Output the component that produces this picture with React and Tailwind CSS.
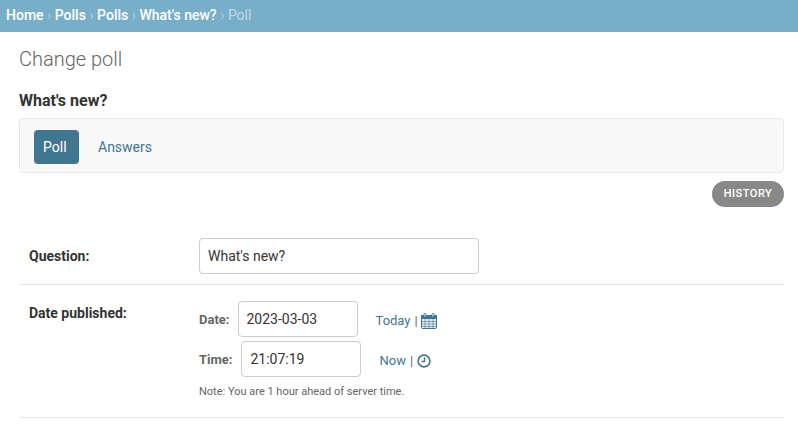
const roboto = "font-['Roboto',sans-serif]";

const Sep = () => <span className="text-[#a8cfe0]"> › </span>;

const CalendarIcon = () => (
  <svg width="16" height="16" viewBox="0 0 16 16" fill="none" stroke="#417690" strokeWidth="1">
    <rect x="0.5" y="2.5" width="15" height="13" rx="1" fill="#e4edf2" />
    <rect x="0.5" y="2.5" width="15" height="3" fill="#417690" />
    <path d="M0.5 8.5H15.5M0.5 11H15.5M0.5 13.5H15.5M4 5.5V15.5M8 5.5V15.5M12 5.5V15.5" strokeWidth="0.6" />
    <rect x="3" y="0.5" width="2" height="3.5" rx="1" fill="#fff" />
    <rect x="11" y="0.5" width="2" height="3.5" rx="1" fill="#fff" />
  </svg>
);

const ClockIcon = () => (
  <svg width="14" height="14" viewBox="0 0 14 14" fill="none" stroke="#417690">
    <circle cx="7" cy="7" r="5.9" strokeWidth="1.6" />
    <path d="M7.5 3.5V7.5H4.5" strokeWidth="1.4" />
  </svg>
);

const DateTimeRow = ({ label, labelGap, value, shortcut, icon }) => (
  <div className="flex items-center h-[38px]">
    <label className={`text-[13px] font-bold text-[#666] leading-none ${labelGap}`}>{label}</label>
    <input
      readOnly
      value={value}
      className="w-[120px] h-[36px] border border-[#ccc] rounded-[4px] px-[8px] text-[14px] text-[#333] bg-white"
    />
    <span className="ml-[18px] mt-[4px] flex items-center text-[13px] text-[#417690]">
      <a>{shortcut}</a>
      <span className="text-[#666] ml-[4px] mr-[3.5px]">|</span>
      {icon}
    </span>
  </div>
);

export default function App() {
  return (
    <div className={`${roboto} w-[798px] h-[434px] overflow-hidden bg-white text-[#333]`}>
      <div className="h-[32px] bg-[#79aec8] flex items-center px-[6px] pb-[2px] text-[14px] font-medium text-white whitespace-pre">
        <span>Home</span><Sep /><span>Polls</span><Sep /><span>Polls</span><Sep /><span>What's new?</span><Sep />
        <span className="text-[#bfdbe8] font-normal">Poll</span>
      </div>

      <div className="px-[19px] pr-[14px]">
        <h1 className="text-[20px] font-light text-[#666] leading-[24px] mt-[15px]">Change poll</h1>
        <h2 className="text-[16px] font-bold text-[#333] leading-[20px] mt-[20px]">What's new?</h2>

        <div className="mt-[7px] h-[55px] bg-[#f8f8f8] border border-[#e8e8e8] rounded-[4px] flex items-center pl-[14px] pt-[3px]">
          <span className="h-[34px] w-[45px] rounded-[4px] bg-[#417690] text-white text-[14px] flex items-center pl-[9px]">Poll</span>
          <span className="ml-[19px] text-[14px] text-[#417690]">Answers</span>
        </div>

        <div className="flex justify-end mt-[8px]">
          <span className="h-[26px] w-[72px] rounded-full bg-[#888] text-white text-[11px] font-medium tracking-[0.5px] flex items-center justify-center">HISTORY</span>
        </div>

        <div className="mt-[12px] h-[66px] border-b border-[#e8e8e8] flex items-start pl-[10px] pt-[19px]">
          <label className="w-[170px] text-[14px] font-bold text-[#333] leading-[36px]">Question:</label>
          <input
            readOnly
            value="What's new?"
            className="w-[280px] h-[36px] border border-[#ccc] rounded-[4px] px-[8px] text-[14px] text-[#333] bg-white"
          />
        </div>

        <div className="h-[133px] border-b border-[#e8e8e8] flex items-start pl-[10px] pt-[15px]">
          <label className="w-[170px] text-[14px] font-bold text-[#333] leading-[26px]">Date published:</label>
          <div className="flex flex-col gap-[2px]">
            <DateTimeRow label="Date:" labelGap="mr-[8px]" value="2023-03-03" shortcut="Today" icon={<CalendarIcon />} />
            <DateTimeRow label="Time:" labelGap="mr-[9px]" value="21:07:19" shortcut="Now" icon={<ClockIcon />} />
            <p className="text-[11px] text-[#666] leading-[14px] mt-[5px]">Note: You are 1 hour ahead of server time.</p>
          </div>
        </div>
      </div>
    </div>
  );
}
